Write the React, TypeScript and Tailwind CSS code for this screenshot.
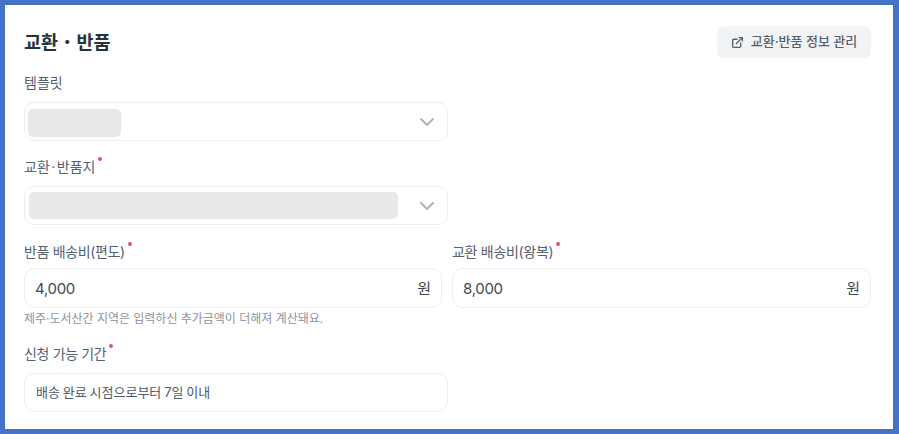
import type { ReactNode } from 'react';
import { ChevronDown, ExternalLink } from 'lucide-react';

const FONT = "font-['Inter','Noto_Sans_CJK_KR',sans-serif]";

function Label({ children, required }: { children: ReactNode; required?: boolean }) {
  return (
    <div className="flex h-[20px] items-center text-[14px] leading-[20px] text-[#566170]">
      <span>{children}</span>
      {required && <span className="mb-[16px] ml-[3px] h-[4px] w-[4px] rounded-full bg-[#e5526a]" />}
    </div>
  );
}

function Select({ skeleton }: { skeleton: string }) {
  return (
    <div className="flex h-[39px] w-[424px] items-center justify-between rounded-[10px] border border-[#eceef1] bg-white pl-[3px] pr-[8px]">
      <div className={`rounded-[5px] bg-[#e8e8e8] ${skeleton}`} />
      <ChevronDown size={24} strokeWidth={2} className="text-[#aeb4bd]" />
    </div>
  );
}

function MoneyInput({ value }: { value: string }) {
  return (
    <div className="flex h-[40px] items-center justify-between rounded-[10px] border border-[#eceef1] bg-white pl-[10px] pr-[10px] pt-[2px] text-[15px] text-[#3f4854]">
      <span className="tracking-[-0.3px]">{value}</span>
      <span>원</span>
    </div>
  );
}

export default function App() {
  return (
    <div className={`h-[434px] w-[899px] border-[5px] border-r-[6px] border-[#4472c4] bg-white ${FONT}`}>
      <div className="pl-[19px] pr-[22px] pt-[21px]">
        <div className="flex h-[32px] items-center justify-between">
          <h2 className="pt-[2px] text-[18.5px] font-bold text-[#28323f]">
            교환<span className="font-normal">・</span>반품
          </h2>
          <button className="flex h-[32px] w-[154px] items-center justify-center gap-[7px] rounded-[7px] bg-[#f2f3f5] text-[13px] font-medium text-[#566170]">
            <ExternalLink size={13} strokeWidth={2.5} />
            교환·반품 정보 관리
          </button>
        </div>

        <div className="mt-[15px]">
          <Label>템플릿</Label>
          <div className="mt-[9px]">
            <Select skeleton="mt-[3px] h-[28px] w-[93px]" />
          </div>
        </div>

        <div className="mt-[16px]">
          <Label required>
            교환<span className="mx-[1.5px]">·</span>반품지
          </Label>
          <div className="mt-[9px]">
            <Select skeleton="-mt-[1px] ml-[1px] h-[27px] w-[369px]" />
          </div>
        </div>

        <div className="mt-[17px] grid grid-cols-[418px_419px] gap-x-[10px]">
          <div>
            <Label required>
              <span className="tracking-[-0.35px]">반품 배송비(편도)</span>
            </Label>
            <div className="mt-[6px]">
              <MoneyInput value="4,000" />
            </div>
            <p className="mt-[3px] text-[12px] leading-[16px] tracking-[-0.02px] text-[#8b95a1]">
              제주·도서산간 지역은 입력하신 추가금액이 더해져 계산돼요.
            </p>
          </div>
          <div>
            <Label required>
              <span className="tracking-[-0.3px]">교환 배송비(왕복)</span>
            </Label>
            <div className="mt-[6px]">
              <MoneyInput value="8,000" />
            </div>
          </div>
        </div>

        <div className="mt-[17px]">
          <Label required>
            <span className="tracking-[-0.35px]">신청 가능 기간</span>
          </Label>
          <div className="mt-[9px] flex h-[39px] w-[424px] items-center rounded-[10px] border border-[#eceef1] bg-white px-[11px] text-[13px] text-[#4e5968] [word-spacing:-0.8px]">
            배송 완료 시점으로부터 7일 이내
          </div>
        </div>
      </div>
    </div>
  );
}
